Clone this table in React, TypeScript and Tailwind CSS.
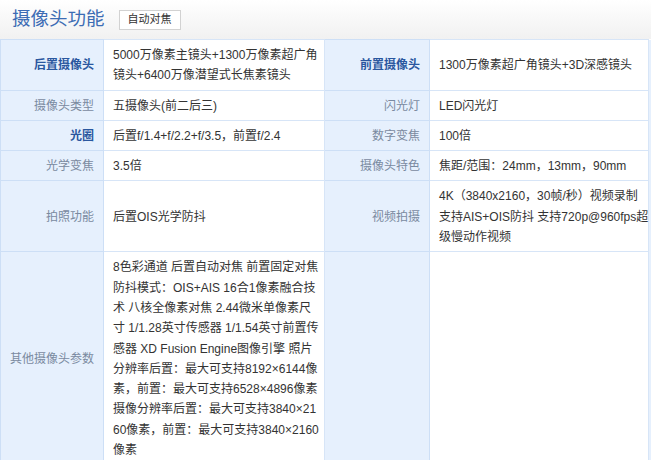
import React from "react";

const font = { fontFamily: '"Liberation Sans", "Noto Sans CJK SC", sans-serif' };

function Label({ children, bold }: { children?: React.ReactNode; bold?: boolean }) {
  return (
    <td
      className={`bg-[#e6f0fd] border border-[#cddff6] pr-[9px] pl-1 pt-[5px] pb-[4px] text-right align-middle leading-[20.3px] text-[12px] whitespace-nowrap ${
        bold ? "font-bold text-[#2a579f]" : "text-[#7a8aa0]"
      }`}
    >
      {children}
    </td>
  );
}

function Value({ children }: { children?: React.ReactNode }) {
  return (
    <td className="bg-white border border-[#d7e5f7] pl-[9px] pr-1 pt-[5px] pb-[4px] text-left align-middle leading-[20.3px] text-[12px] text-[#333333] whitespace-nowrap">
      {children}
    </td>
  );
}

function Strip() {
  return <td className="bg-[#e6f0fd] border-l border-[#cddff6] p-0"></td>;
}

export default function App() {
  return (
    <div className="w-[651px] h-[460px] overflow-hidden bg-white" style={font}>
      <div className="h-[39px] flex items-center pl-[12px] gap-[14px] bg-gradient-to-b from-[#ffffff] to-[#f1f1f1]">
        <span className="text-[18.5px] text-[#3c6cb4] leading-none">摄像头功能</span>
        <span className="h-[20px] w-[62px] flex items-center justify-center border border-[#d2d2d2] bg-white text-[11px] text-[#333333] leading-none">
          自动对焦
        </span>
      </div>
      <table className="border-collapse table-fixed w-[651px]">
        <colgroup>
          <col className="w-[103px]" />
          <col className="w-[221px]" />
          <col className="w-[105px]" />
          <col className="w-[219px]" />
          <col className="w-[3px]" />
        </colgroup>
        <tbody>
          <tr>
            <Label bold>后置摄像头</Label>
            <Value>
              5000万像素主镜头+1300万像素超广角
              <br />
              镜头+6400万像潜望式长焦素镜头
            </Value>
            <Label bold>前置摄像头</Label>
            <Value>1300万像素超广角镜头+3D深感镜头</Value>
            <Strip />
          </tr>
          <tr>
            <Label>摄像头类型</Label>
            <Value>五摄像头(前二后三)</Value>
            <Label>闪光灯</Label>
            <Value>LED闪光灯</Value>
            <Strip />
          </tr>
          <tr>
            <Label bold>光圈</Label>
            <Value>后置f/1.4+f/2.2+f/3.5，前置f/2.4</Value>
            <Label>数字变焦</Label>
            <Value>100倍</Value>
            <Strip />
          </tr>
          <tr>
            <Label>光学变焦</Label>
            <Value>3.5倍</Value>
            <Label>摄像头特色</Label>
            <Value>焦距/范围：24mm，13mm，90mm</Value>
            <Strip />
          </tr>
          <tr>
            <Label>拍照功能</Label>
            <Value>后置OIS光学防抖</Value>
            <Label>视频拍摄</Label>
            <Value>
              4K（3840x2160，30帧/秒）视频录制
              <br />
              支持AIS+OIS防抖 支持720p@960fps超
              <br />
              级慢动作视频
            </Value>
            <Strip />
          </tr>
          <tr>
            <Label>其他摄像头参数</Label>
            <Value>
              8色彩通道 后置自动对焦 前置固定对焦
              <br />
              防抖模式：OIS+AIS 16合1像素融合技
              <br />
              术 八核全像素对焦 2.44微米单像素尺
              <br />
              寸 1/1.28英寸传感器 1/1.54英寸前置传
              <br />
              感器 XD Fusion Engine图像引擎 照片
              <br />
              分辨率后置：最大可支持8192×6144像
              <br />
              素，前置：最大可支持6528×4896像素
              <br />
              摄像分辨率后置：最大可支持3840×21
              <br />
              60像素，前置：最大可支持3840×2160
              <br />
              像素
            </Value>
            <Label></Label>
            <Value></Value>
            <Strip />
          </tr>
        </tbody>
      </table>
    </div>
  );
}
